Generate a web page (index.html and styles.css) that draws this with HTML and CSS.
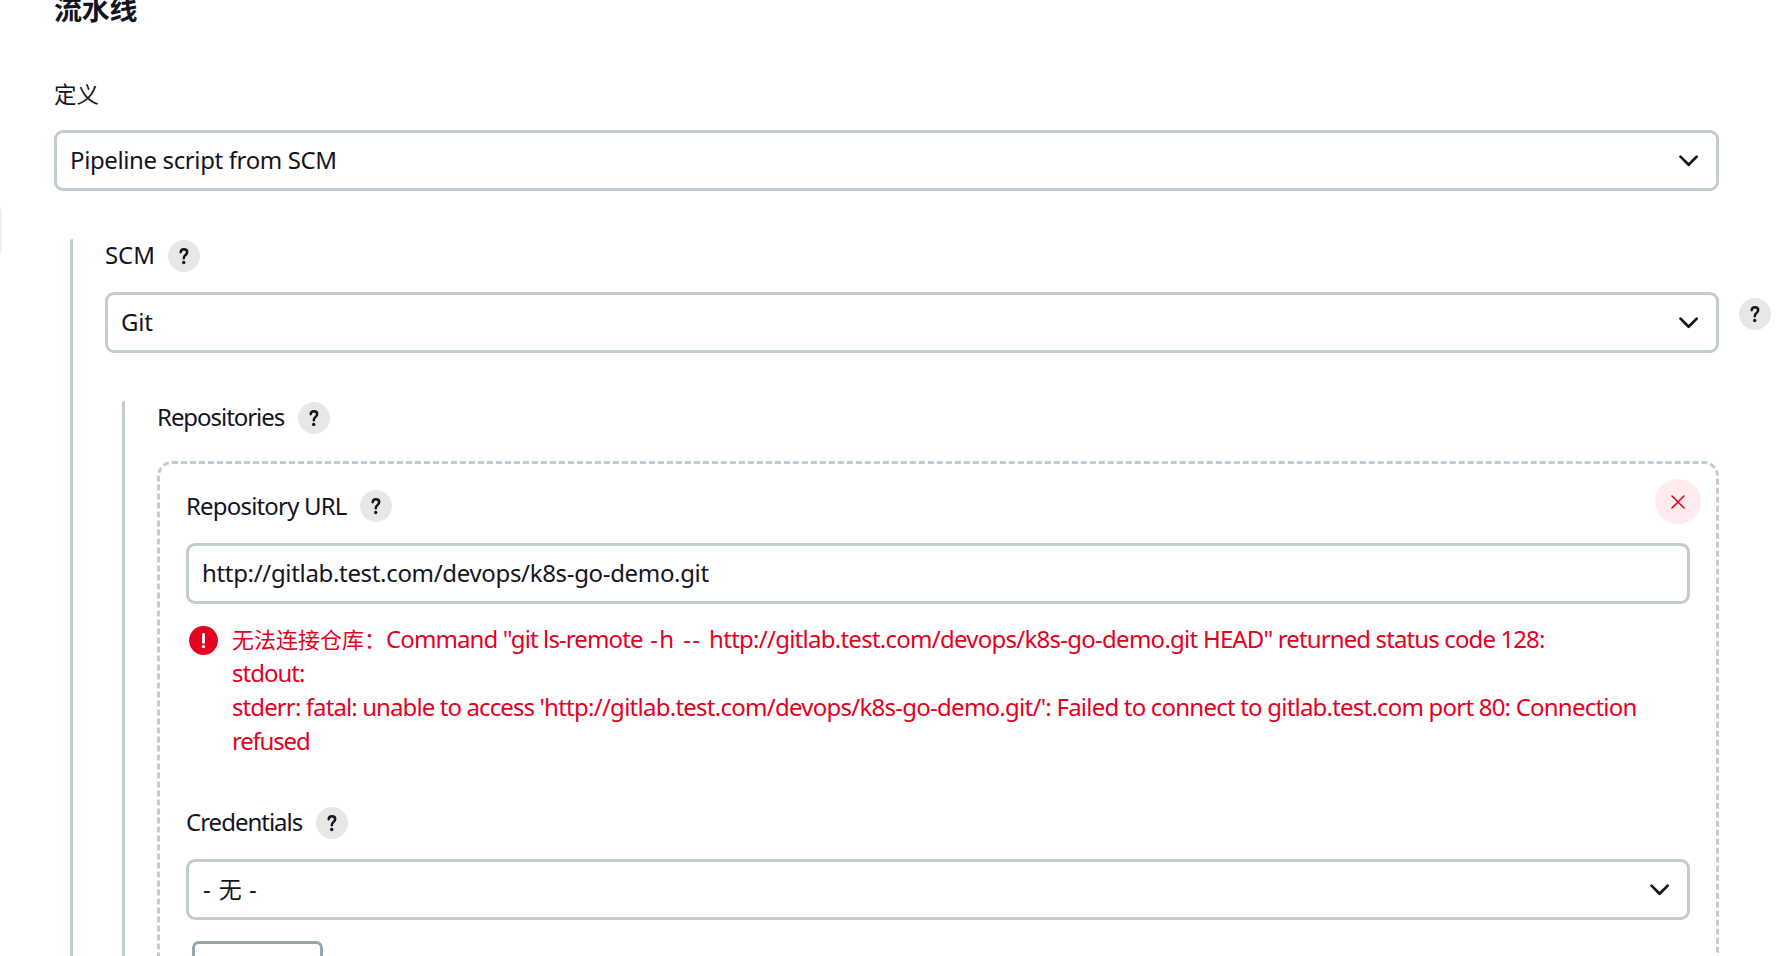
FILE: index.html
```html
<!DOCTYPE html>
<html lang="zh-CN">
<head>
<meta charset="utf-8">
<title>流水线</title>
<link rel="stylesheet" href="styles.css">
</head>
<body>
<svg class="defs" width="0" height="0">
  <symbol id="help" viewBox="0 0 32 32"><path d="M12.7 12.2C12.9 10.1 14.1 9.2 15.8 9.2C17.8 9.2 19.2 10.4 19.2 12.1C19.2 13.7 18.4 14.5 17.3 15.2C16.2 16 15.8 16.6 15.8 18.2" fill="none" stroke="currentColor" stroke-width="2.5" stroke-linecap="round" stroke-linejoin="round"/><circle cx="15.7" cy="22.5" r="1.7" fill="currentColor"/></symbol>
  <symbol id="chevron" viewBox="0 0 20 12"><path d="M1.5 1.6L9.6 9.7L17.7 1.6" fill="none" stroke="currentColor" stroke-width="2.7" stroke-linecap="round" stroke-linejoin="round"/></symbol>
</svg>
<aside class="side-item"></aside>
<main class="page">
  <h2 class="title">流水线</h2>
  <div class="label label-definition"><span class="cjk">定义</span></div>
  <div class="control"><span class="text t-pipeline">Pipeline script from SCM</span><svg class="chevron"><use href="#chevron"/></svg></div>
  <section class="nested nested-scm">
    <div class="label"><span class="text t-scm">SCM</span><span class="help"><svg><use href="#help"/></svg></span></div>
    <div class="control-row">
      <div class="control"><span class="text t-git">Git</span><svg class="chevron"><use href="#chevron"/></svg></div>
      <span class="help help-outer"><svg><use href="#help"/></svg></span>
    </div>
    <section class="nested nested-repos">
      <div class="label"><span class="text t-repos">Repositories</span><span class="help"><svg><use href="#help"/></svg></span></div>
      <div class="repo">
        <button class="remove" aria-label="remove"><svg viewBox="0 0 14 14"><path d="M1 1L13 13M13 1L1 13" fill="none" stroke="currentColor" stroke-width="1.6" stroke-linecap="round"/></svg></button>
        <div class="label"><span class="t-url">Repository URL</span><span class="help"><svg><use href="#help"/></svg></span></div>
        <div class="control"><span class="text t-value">http://gitlab.test.com/devops/k8s-go-demo.git</span></div>
        <div class="error">
          <svg class="error-icon" viewBox="0 0 29 29"><circle cx="14.5" cy="14.5" r="14.4" fill="currentColor"/><path d="M14.5 8.3V16.4" stroke="#fff" stroke-width="2.8" stroke-linecap="round"/><circle cx="14.5" cy="20.6" r="1.7" fill="#fff"/></svg>
          <div class="error-text">
            <div><span class="cjk">无法连接仓库：</span>Command "git ls-remote<span class="e-options"> -h -- </span><span class="e-address">http://gitlab.test.com/devops/k8s-go-demo.git </span><span class="e-status">HEAD" returned status code 128:</span></div>
            <div class="e-stdout">stdout:</div>
            <div>stderr: fatal: unable to access <span class="e-address">'http://gitlab.test.com/devops/k8s-go-demo.git/': </span><span class="e-reason">Failed to connect to gitlab.test.com port 80: Connection</span></div>
            <div class="e-refused">refused</div>
          </div>
        </div>
        <div class="label label-cred"><span class="text t-cred">Credentials</span><span class="help"><svg><use href="#help"/></svg></span></div>
        <div class="control"><span class="text t-none">- <span class="cjk">无</span> -</span><svg class="chevron"><use href="#chevron"/></svg></div>
        <button class="add" aria-label="add"></button>
      </div>
    </section>
  </section>
</main>
</body>
</html>
```
FILE: styles.css
```css
* { box-sizing: border-box; }
html, body { height: 956px; overflow: hidden; }
body {
  margin: 0;
  background: #fff;
  color: #14141f;
  font: 24px/34px "Noto Sans", "Noto Sans CJK SC", sans-serif;
  letter-spacing: -0.9px;
}
.defs { position: absolute; }
.side-item {
  position: absolute;
  left: -20px;
  top: 206px;
  width: 22px;
  height: 50px;
  border-radius: 6px;
  background: #eeeef3;
}
.page { padding: 0 57px 0 54px; height: 956px; overflow: hidden; }
.title {
  margin: -11px 0 0;
  height: 36px;
  font: bold 28px/38px "Noto Sans CJK SC", sans-serif;
  letter-spacing: -0.2px;
  white-space: nowrap;
}
.cjk { font-family: "Noto Sans CJK SC", sans-serif; font-size: 22px; letter-spacing: 0; line-height: 1; }
.text { padding-bottom: 2px; }
.label { display: flex; align-items: center; height: 32px; white-space: nowrap; }
.label-definition { margin: 52px 0 21px; }
.label-definition .cjk { font-size: 22.5px; }
.t-pipeline { letter-spacing: -0.38px; }
.t-scm { letter-spacing: -0.1px; margin-right: -1px; }
.t-git { letter-spacing: -0.2px; }
.t-repos { letter-spacing: -1.05px; }
.t-url { letter-spacing: -0.82px; margin-right: -1px; }
.t-value { letter-spacing: -0.33px; }
.t-cred { letter-spacing: -1px; }
.t-none { letter-spacing: 0.9px; padding-left: 1px; }
.t-none .cjk { font-size: 23px; }
.help {
  flex: none;
  width: 32px;
  height: 32px;
  margin-left: 14px;
  border-radius: 50%;
  background: #e7e7e7;
}
.help svg { display: block; width: 32px; height: 32px; }
.control {
  display: flex;
  align-items: center;
  justify-content: space-between;
  height: 61px;
  padding: 0 17px 0 13px;
  border: 3px solid #c3ccd1;
  border-radius: 9px;
  white-space: nowrap;
}
.chevron { flex: none; width: 20px; height: 12px; }
.nested { border-left: 3px solid #c3ccd1; border-radius: 2px 0 0 0; }
.nested-scm { margin: 48px 0 0 16px; padding: 1px 0 0 32px; height: 760px; }
.control-row { position: relative; margin-top: 20px; }
.help-outer { position: absolute; left: 100%; top: 6px; margin-left: 20px; }
.nested-repos { margin: 48px 0 0 17px; padding: 1px 0 0 32px; height: 600px; }
.repo {
  position: relative;
  height: 560px;
  margin-top: 27px;
  padding: 26px 26px 0;
  border: 3px dashed #c3ccd1;
  border-radius: 15px;
}
.remove {
  position: absolute;
  right: 15px;
  top: 15px;
  display: flex;
  align-items: center;
  justify-content: center;
  width: 46px;
  height: 45px;
  padding: 0;
  border: 0;
  border-radius: 50%;
  background: #fdebed;
  color: #e6001f;
}
.remove svg { width: 14px; height: 14px; }
.repo .control { margin-top: 21px; }
.error { display: flex; padding: 18px 0 0 3px; color: #e6001f; white-space: nowrap; }
.error-icon { flex: none; width: 29px; height: 29px; margin: 4px 14px 0 0; }
.error-text > div { height: 34px; white-space: pre; }
.e-options { letter-spacing: 1.4px; }
.e-address { letter-spacing: -0.74px; }
.e-status { letter-spacing: -0.88px; }
.e-reason { letter-spacing: -0.79px; }
.e-stdout { letter-spacing: -1px; }
.e-refused { letter-spacing: -1.2px; }
.label-cred { margin-top: 49px; }
.repo .label-cred + .control { margin-top: 20px; }
.add {
  display: block;
  width: 131px;
  height: 60px;
  margin: 21px 0 0 6px;
  border: 3px solid #98a5ae;
  border-radius: 7px;
  background: #fff;
}
```
